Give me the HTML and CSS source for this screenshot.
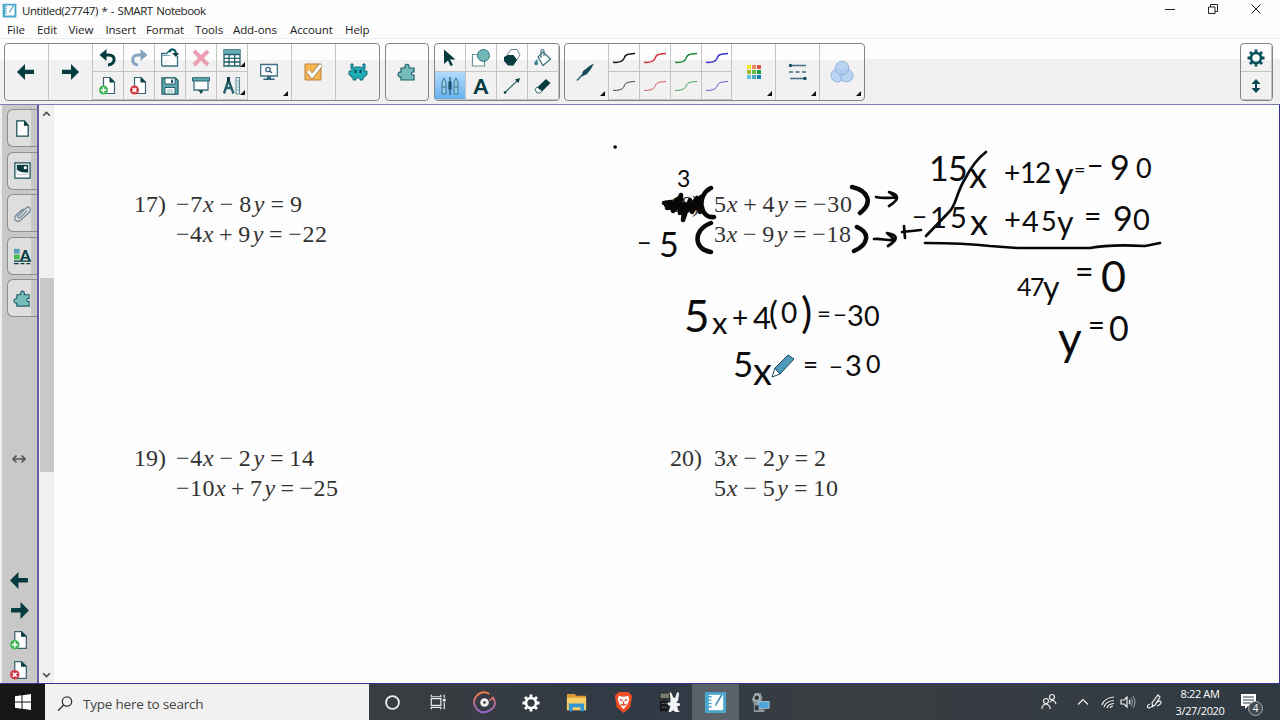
FILE: index.html
```
<!DOCTYPE html>
<html lang="en">
<head>
    <meta charset="UTF-8">
    <meta name="viewport" content="width=device-width, initial-scale=1.0">
    <title>Untitled(27747) * - SMART Notebook</title>
    <link rel="stylesheet" href="styles.css">
</head>
<body>
    <!-- Shared icons -->
    <svg class="defs" width="0" height="0">
        <symbol id="arrow-left" viewBox="0 0 20 16"><path d="M1 8 9 0V5.700H18V10H9V16Z"/></symbol>
        <symbol id="arrow-right" viewBox="0 0 20 16"><path d="M19 8 11 0V5.700H2V10H11V16Z"/></symbol>
        <symbol id="page" viewBox="0 0 20 20"><path d="M5.500 1.500H12L16.500 6V17.500H5.500Z" fill="#fff" stroke="#3d6470" stroke-width="1.200"/><path d="M11.500 1 17 6.500H11.500Z" fill="#063b3f"/></symbol>
        <symbol id="page-add" viewBox="0 0 20 20"><use href="#page"/><circle cx="5.500" cy="14" r="4.500" fill="#3fb757"/><path d="M5.500 11.300V16.700M2.800 14H8.200" stroke="#fff" stroke-width="1.500"/></symbol>
        <symbol id="page-del" viewBox="0 0 20 20"><use href="#page"/><circle cx="5.500" cy="14" r="4.500" fill="#cf3a45"/><path d="M3.600 12.100 7.400 15.900M7.400 12.100 3.600 15.900" stroke="#fff" stroke-width="1.500"/></symbol>
        <symbol id="puzzle" viewBox="0 0 20 20"><path d="M4 6H8C7 1 13 1 12 6H17V10C13.500 9 13.500 14 17 13V18H4V15C0 15.500 0 9.500 4 10Z" fill="#74bdbb" stroke="#24616b" stroke-width="1.200"/></symbol>
        <symbol id="stroke" viewBox="0 0 24 12"><path d="M1 10.300C6 10.800 10.500 9.500 12 6.500 13 2.800 15 2 23 1.500" fill="none" stroke="currentColor"/></symbol>
        <symbol id="gear" viewBox="0 0 20 20"><circle cx="10" cy="10" r="5" fill="none" stroke="currentColor" stroke-width="2.600"/><path d="M10 1.500V5M10 15V18.500M1.500 10H5M15 10H18.500M4 4 6.500 6.500M13.500 13.500 16 16M16 4 13.500 6.500M6.500 13.500 4 16" stroke="currentColor" stroke-width="2.800"/></symbol>
        <symbol id="notebook" viewBox="0 0 24 24"><rect x="1" y="1" width="22" height="22" rx="1" fill="#4ba7cc"/><path d="M5 4H20V20H5Z" fill="#fff"/><path d="M4 6H8M4 9.500H8M4 13H8M4 16.500H8" stroke="#4ba7cc" stroke-width="1.500"/><path d="M19.500 4 13 14.500 11.500 16.500 12 13.500 18 3.500Z" fill="#2d7fa5"/></symbol>
    </svg>

    <!-- Title bar -->
    <header class="titlebar">
        <svg class="app-icon" viewBox="0 0 24 24"><use href="#notebook"/></svg>
        <span class="title">Untitled(27747) * - SMART Notebook</span>
        <div class="window-buttons">
            <svg viewBox="0 0 12 12"><path d="M1 6.500H11"/></svg>
            <svg viewBox="0 0 12 12"><path d="M1.500 4H8V10.500H1.500ZM3.500 4V1.500H10.500V8.500H8"/></svg>
            <svg viewBox="0 0 12 12"><path d="M1.500 1.500 10.500 10.500M10.500 1.500 1.500 10.500"/></svg>
        </div>
    </header>

    <!-- Menu -->
    <nav class="menubar">
        <span class="m-file">File</span>
        <span class="m-edit">Edit</span>
        <span class="m-view">View</span>
        <span class="m-insert">Insert</span>
        <span class="m-format">Format</span>
        <span class="m-tools">Tools</span>
        <span class="m-addons">Add-ons</span>
        <span class="m-account">Account</span>
        <span>Help</span>
    </nav>

    <!-- Toolbar -->
    <div class="toolbar">
        <div class="group">
            <div class="tool"><svg class="wide-arrow" viewBox="0 0 20 16"><use href="#arrow-left"/></svg></div>
            <div class="tool"><svg class="wide-arrow" viewBox="0 0 20 16"><use href="#arrow-right"/></svg></div>
            <div class="tool-grid cols-5">
                <div class="tool"><svg viewBox="0 0 20 20"><path d="M5 7H11C18 7 18 16 10 17" fill="none" stroke="#063b3f" stroke-width="3"/><path d="M1.500 7 8.500 1V13Z"/></svg></div>
                <div class="tool"><svg viewBox="0 0 20 20"><path d="M15 7H9C2 7 2 16 9 17" fill="none" stroke="#86a3bf" stroke-width="3"/><path d="M18.500 7 11.500 1V13Z" fill="#86a3bf"/></svg></div>
                <div class="tool"><svg viewBox="0 0 20 20"><path d="M1.700 18V5.500H7L8.500 3.500H11M17.500 8V18H1.700" fill="#fff" stroke="#3a7182" stroke-width="1.300"/><path d="M2 7.500H10" stroke="#6babb7"/><path d="M9 4C11 0 15 1 16 5" fill="none" stroke="#07585f" stroke-width="2.200"/><path d="M12 5H19L16 9Z"/></svg></div>
                <div class="tool"><svg viewBox="0 0 20 20"><path d="M3 3 17 17M17 3 3 17" stroke="#eda0b4" stroke-width="4"/></svg></div>
                <div class="tool more"><svg viewBox="0 0 20 20"><path d="M2 2H18V18H2Z" fill="#fff" stroke="#24616b" stroke-width="1.300"/><path d="M2 2H18V6H2Z" fill="#62aeb4"/><path d="M2 6.500H18M2 10.300H18M2 14H18M7 6V18M12.700 6V18" stroke="#24616b" stroke-width="1.300"/></svg></div>
                <div class="tool"><svg viewBox="0 0 20 20"><use href="#page-add"/></svg></div>
                <div class="tool"><svg viewBox="0 0 20 20"><use href="#page-del"/></svg></div>
                <div class="tool"><svg viewBox="0 0 20 20"><path d="M2 2H15.500L18 4.500V18H2Z" fill="#60a9b2" stroke="#24616b" stroke-width="1.300"/><path d="M5 2H15V8H5ZM5 11.500H15V18H5Z" fill="#fff" stroke="#24616b"/><path d="M11 3.500H13V7H11Z" fill="#245b68"/><path d="M7 14H13M7 16H13" stroke="#9ab8be"/></svg></div>
                <div class="tool"><svg viewBox="0 0 20 20"><path d="M3 4H17V14H3Z" fill="#fff" stroke="#3a7182" stroke-width="1.300"/><path d="M1.500 1.700H18.500V5H1.500Z" fill="#64aab6" stroke="#24616b"/><path d="M7.500 14.500H12.500L10 18Z"/></svg></div>
                <div class="tool more"><svg viewBox="0 0 20 20"><path d="M6.500 4 2 17.500M6.500 4 11.500 17.500M4 12H9" fill="none" stroke="#24616b" stroke-width="2.400"/><path d="M5 1H8V6H5Z"/><path d="M14 1.500H17.500V18H14Z" fill="#e8f3f4" stroke="#598692"/><path d="M15.500 5H17M15.500 8H17M15.500 11H17M15.500 14H17" stroke="#598692"/></svg></div>
            </div>
            <div class="tool more"><svg viewBox="0 0 20 20"><path d="M1.700 2.500H18.300V14H1.700Z" fill="#fff" stroke="#3f7085" stroke-width="1.300"/><path d="M8 14H12V16.500H15.500V18H4.500V16.500H8Z" fill="#33667b"/><circle cx="9" cy="7.500" r="2.200" fill="none" stroke="#3a637f" stroke-width="1.300"/><path d="M11 9 13 11" stroke="#3a637f" stroke-width="1.500"/></svg></div>
            <div class="tool"><svg viewBox="0 0 20 20"><path d="M2 2H18V18H2Z" fill="#f6b452" stroke="#b78239"/><path d="M5 9 9 14 18 3" fill="none" stroke="#8e7854" stroke-width="4.400"/><path d="M5 9 9 14 18 3" fill="none" stroke="#fff" stroke-width="3"/></svg></div>
            <div class="tool"><svg viewBox="0 0 20 20"><path d="M3 2H5V6H7V5H13V6H15V2H17V7H16V9H19V13H17V15H15V18H12V16H8V18H5V15H3V13H1V9H4V7H3Z" fill="#21adb8" stroke="#126f7e"/><path d="M6.500 8H8.500V11H6.500ZM11.500 8H13.500V11H11.500Z" fill="#05424b"/></svg></div>
        </div>

        <div class="group single">
            <div class="tool"><svg viewBox="0 0 20 20"><use href="#puzzle"/></svg></div>
        </div>

        <div class="group">
            <div class="tool-grid cols-4">
                <div class="tool"><svg viewBox="0 0 20 20"><path d="M4 1.500 15.500 11.500 10 11.500 13 17 10.500 18 8 12.500 4 16Z"/></svg></div>
                <div class="tool"><svg viewBox="0 0 20 20"><path d="M1.500 6.500H13.500V18H1.500Z" fill="#fff" stroke="#6f9696" stroke-width="1.200"/><circle cx="12.500" cy="7.500" r="6" fill="#70b7b7" stroke="#34737b"/></svg></div>
                <div class="tool"><svg viewBox="0 0 20 20"><path d="M9 1.500H15L18 7 14 13H8L5 7Z" fill="#fff" stroke="#69888d"/><path d="M6 7H11.500L15 12 11.500 17.500H6L2 13V9Z"/></svg></div>
                <div class="tool"><svg viewBox="0 0 20 20"><path d="M10 4 17.500 11 10 17.500 5 9Z" fill="#fff" stroke="#417780" stroke-width="1.300"/><path d="M8 10V3C8 1 11 1 11 3V8" fill="none" stroke="#417780" stroke-width="1.200"/><path d="M4 11Q0 15 2 17 4 18 5 16Z" fill="#397c8f"/></svg></div>
                <div class="tool selected"><svg viewBox="0 0 20 20"><path d="M2 18V6L4 2 6 6V18ZM14 18V6L16 2 18 6V18Z" fill="#93cbe2" stroke="#397998"/><path d="M10 1V19M9 6H11V13H9Z" fill="#15516a" stroke="#15516a" stroke-width="1.200"/><path d="M2 11H6M14 11H18" stroke="#397998"/></svg></div>
                <div class="tool"><span class="letter">A</span></div>
                <div class="tool"><svg viewBox="0 0 20 20"><path d="M3 16.500 16 4" stroke="#376f76" stroke-width="1.200"/><circle cx="3" cy="16.500" r="1.300"/><path d="M18 2 16.500 7 13 3.500Z"/></svg></div>
                <div class="tool"><svg viewBox="0 0 20 20"><path d="M13 3 17.500 7 8 16.500H4L2 13.500Z"/><path d="M4 11 9 15 7 17H4L2 13.500Z" fill="#fff" stroke="#376f76"/></svg></div>
            </div>
        </div>

        <div class="group">
            <div class="tool more"><svg viewBox="0 0 20 20"><path d="M18 1.500C14 3 10 7 7 9L5 15 11 12C14 9 16 5 18 1.500Z" fill="#194b5a"/><path d="M6 13 1 18.500" stroke="#386b78" stroke-width="1.600"/></svg></div>
            <div class="tool-grid cols-4 pens">
                <div class="tool black"><svg viewBox="0 0 24 12"><use href="#stroke"/></svg></div>
                <div class="tool red"><svg viewBox="0 0 24 12"><use href="#stroke"/></svg></div>
                <div class="tool green"><svg viewBox="0 0 24 12"><use href="#stroke"/></svg></div>
                <div class="tool blue"><svg viewBox="0 0 24 12"><use href="#stroke"/></svg></div>
                <div class="tool black thin"><svg viewBox="0 0 24 12"><use href="#stroke"/></svg></div>
                <div class="tool red thin"><svg viewBox="0 0 24 12"><use href="#stroke"/></svg></div>
                <div class="tool green thin"><svg viewBox="0 0 24 12"><use href="#stroke"/></svg></div>
                <div class="tool blue thin"><svg viewBox="0 0 24 12"><use href="#stroke"/></svg></div>
            </div>
            <div class="tool more">
                <div class="swatches"><i class="yellow"></i><i class="orange"></i><i class="coral"></i><i class="olive"></i><i class="lime"></i><i class="leaf"></i><i class="sky"></i><i class="teal"></i><i class="azure"></i></div>
            </div>
            <div class="tool more"><svg viewBox="0 0 20 20"><path d="M2 3.500H18M2 16.500H17" stroke="#416b80" stroke-width="1.300"/><path d="M1 10H19" stroke="#416b80" stroke-width="1.500" stroke-dasharray="4 2.500"/><circle cx="2.500" cy="3.500" r="1.700" fill="#174b60"/><circle cx="17" cy="16.500" r="1.700" fill="#174b60"/></svg></div>
            <div class="tool more"><svg class="circles" viewBox="0 0 24 24"><g fill="#aecdf2" fill-opacity=".8" stroke="#86a8d2" stroke-width=".8"><circle cx="7.500" cy="15.500" r="6.500"/><circle cx="16.500" cy="15.500" r="6.500"/><circle cx="12" cy="8" r="6.800"/></g></svg></div>
        </div>

        <div class="group settings">
            <div class="tool-grid cols-1">
                <div class="tool gear"><svg viewBox="0 0 20 20"><use href="#gear"/></svg></div>
                <div class="tool"><svg viewBox="0 0 20 20"><path d="M10 3 14.500 8H11V12H14.500L10 17 5.500 12H9V8H5.500Z" fill="#084b56"/></svg></div>
            </div>
        </div>
    </div>

    <!-- Workspace -->
    <main class="workspace">
        <aside class="sidebar">
            <div class="tab"><svg viewBox="0 0 20 20"><path d="M4 2H12L16 6.500V18H4Z" fill="#fff" stroke="#174e53" stroke-width="1.300"/><path d="M11.500 1.500 16.500 7H11.500Z"/></svg></div>
            <div class="tab"><svg viewBox="0 0 20 20"><path d="M2 2H18V18H2Z" fill="#fff" stroke="#174e53" stroke-width="1.300"/><path d="M4 4H16V14H4Z"/><path d="M4 9Q8 13 16 12V14H4Z" fill="#fff"/><circle cx="13" cy="7" r="1.700" fill="#fff"/></svg></div>
            <div class="tab"><svg viewBox="0 0 20 20"><path d="M15 7 8 14Q5 16 5 13L13 5Q17 1 18 5 19 7 16 10L8 17Q4 20 2 16 1 14 4 11L11 5" fill="none" stroke="#718797" stroke-width="1.300"/></svg></div>
            <div class="tab"><svg viewBox="0 0 20 20"><path d="M1 3H7V8H1Z" fill="#5b9cbf"/><path d="M1 9H7V14H1Z" fill="#42bd4b"/><path d="M1 16H19M1 18.500H6M8 18.500H12M14 18.500H18" stroke="#063b3f" stroke-width="1.300"/></svg><span class="letter">A</span></div>
            <div class="tab"><svg viewBox="0 0 20 20"><use href="#puzzle"/></svg></div>
            <svg class="resize" viewBox="0 0 14 10"><path d="M1 5H13M4.500 1.500 1 5 4.500 8.500M9.500 1.500 13 5 9.500 8.500"/></svg>
            <div class="page-controls">
                <svg viewBox="0 0 20 18"><use href="#arrow-left"/></svg>
                <svg viewBox="0 0 20 18"><use href="#arrow-right"/></svg>
                <svg viewBox="0 0 20 20"><use href="#page-add"/></svg>
                <svg viewBox="0 0 20 20"><use href="#page-del"/></svg>
            </div>
        </aside>
        <div class="scrollbar">
            <svg viewBox="0 0 8 6"><path d="M1 5 4 2 7 5"/></svg>
            <div class="thumb"></div>
            <svg viewBox="0 0 8 6"><path d="M1 1 4 4 7 1"/></svg>
        </div>

        <!-- Worksheet page, drawn in window coordinates -->
        <svg class="canvas" viewBox="54 105 1225 578">
            <g class="problem">
                <text x="134" y="212" textLength="32">17)</text>
                <text x="176" y="212" textLength="126">−7<tspan class="var">x</tspan> − 8<tspan class="var" dx="2">y</tspan> = 9</text>
                <text x="176" y="242" textLength="151">−4<tspan class="var">x</tspan> + 9<tspan class="var" dx="2">y</tspan> = −22</text>
                <text x="670" y="212" textLength="30">18)</text>
                <text x="714" y="212" textLength="138">5<tspan class="var">x</tspan> + 4<tspan class="var" dx="2">y</tspan> = −30</text>
                <text x="714" y="242" textLength="137">3<tspan class="var">x</tspan> − 9<tspan class="var" dx="2">y</tspan> = −18</text>
                <text x="134" y="466" textLength="32">19)</text>
                <text x="176" y="466" textLength="138">−4<tspan class="var">x</tspan> − 2<tspan class="var" dx="2">y</tspan> = 14</text>
                <text x="176" y="496" textLength="162">−10<tspan class="var">x</tspan> + 7<tspan class="var" dx="2">y</tspan> = −25</text>
                <text x="670" y="466" textLength="32">20)</text>
                <text x="714" y="466" textLength="112">3<tspan class="var">x</tspan> − 2<tspan class="var" dx="2">y</tspan> = 2</text>
                <text x="714" y="496" textLength="124">5<tspan class="var">x</tspan> − 5<tspan class="var" dx="2">y</tspan> = 10</text>
            </g>

            <!-- Handwritten work, each character at its own spot -->
            <g class="hand">
                <text x="677" y="187" font-size="23">3</text>
                <text x="637 659" y="252 257" font-size="34"><tspan font-size="25">−</tspan>5</text>

                <text x="929 948 969 1004 1020 1035 1055 1074 1087 1110 1136" y="181 181 188 183 183 183 188 177 176 180 178" font-size="34">15<tspan font-size="36">x</tspan><tspan font-size="28">+12</tspan><tspan font-size="36">y</tspan><tspan font-size="20">=</tspan><tspan font-size="28">−</tspan>9<tspan font-size="27">0</tspan></text>
                <text x="912 930 950 970 1004 1022 1041 1057 1084 1113 1133" y="226 228 228 235 230 232 231 234 227 231 230" font-size="29"><tspan font-size="26">−</tspan>15<tspan font-size="36">x</tspan>+4<tspan font-size="27">5</tspan><tspan font-size="32">y</tspan><tspan font-size="30">=</tspan><tspan font-size="34">9</tspan><tspan font-size="29">0</tspan></text>
                <text x="1017 1030 1043 1075 1101" y="296 296 299 283 292" font-size="32"><tspan font-size="25">4</tspan><tspan font-size="25">7</tspan>y=<tspan font-size="43">0</tspan></text>
                <text x="1058 1088 1109" y="355 335 341" font-size="46">y<tspan font-size="29">=</tspan><tspan font-size="34">0</tspan></text>

                <text x="684 712 732 753 769 781 801 817 833 847 864" y="332 334 328 329 325 323 328 322 323 326 326" font-size="31"><tspan font-size="44">5</tspan>x<tspan font-size="28">+</tspan>4<tspan font-size="33">(</tspan><tspan font-size="28">0</tspan><tspan font-size="42">)</tspan><tspan font-size="24">=−</tspan><tspan font-size="29">3</tspan><tspan font-size="27">0</tspan></text>
                <text x="733 753 803 829 845 866" y="377 385 374 375 376 373" font-size="35">5<tspan font-size="38">x</tspan><tspan font-size="26">=</tspan><tspan font-size="24">−</tspan><tspan font-size="29">3</tspan><tspan font-size="25">0</tspan></text>
            </g>

            <g class="ink">
                <path class="dot" d="M615 147h.2"/>
                <path class="bold" d="M664 203 671 202 667 208 678 199 673 211 681 195 680 213 685 204 683 220 690 200 687 211 697 198 692 212 701 197 700 212M666 205H699M670 208H698"/>
                <path class="bold" d="M711 188C696 195 700 219 714 217M711 223C692 230 694 250 711 252M852 187C869 191 873 203 860 213M857 227C871 233 868 245 854 251"/>
                <path d="M876 197C884 199 891 197 897 198L889 192Q905 196 889 206M874 239C881 238 887 241 895 240L887 233Q904 236 888 246M904 226 905 238M902 232 921 230"/>
                <path d="M986 152Q974 161 965 179C957 191 956 205 950 211L926 236"/>
                <path d="M925 243Q964 243 990 246L1017 248H1090Q1110 244 1145 246L1160 243"/>
            </g>

            <!-- Pen cursor -->
            <g class="pen-cursor" stroke-linejoin="round">
                <path d="M772 377 775 368 780 374Z" fill="#fff"/>
                <path d="M775 368 788 355 794 359 780 374Z" fill="#519bb9"/>
            </g>
        </svg>
    </main>

    <!-- Taskbar -->
    <footer class="taskbar">
        <div class="start"><svg viewBox="0 0 16 16"><path d="M0 2.200 6.500 1.300V7.500H0ZM7.500 1.200 16 0V7.500H7.500ZM0 8.500H6.500V14.700L0 13.800ZM7.500 8.500H16V16L7.500 14.800Z"/></svg></div>
        <div class="search">
            <svg viewBox="0 0 18 18"><circle cx="11" cy="6.500" r="4.700"/><path d="M7.700 10 2 15.700"/></svg>
            <span>Type here to search</span>
        </div>
        <div class="apps">
            <div class="app"><svg viewBox="0 0 24 24"><circle cx="12" cy="12" r="6.700" fill="none" stroke="#eee" stroke-width="1.900"/></svg></div>
            <div class="app"><svg viewBox="0 0 24 24"><path d="M4.500 8H14.500V15H4.500ZM4.500 4V6H14.500V4M4.500 19V17H14.500V19M18 4V7M18 12V19" fill="none" stroke="#e8e8e8" stroke-width="1.300"/><path d="M16.500 8H19.500V11H16.500Z" fill="#e8e8e8"/></svg></div>
            <div class="app"><svg viewBox="0 0 24 24"><defs><linearGradient id="ring" x2="0" y2="1"><stop offset="0" stop-color="#f27b43"/><stop offset=".5" stop-color="#b96c86"/><stop offset="1" stop-color="#9165cd"/></linearGradient></defs><path d="M17 3Q10-1 4 5T4 19Q10 25 18 20T21 7L17 10" fill="none" stroke="url(#ring)" stroke-width="2"/><circle cx="12" cy="12" r="4.500" fill="#eee"/><circle cx="12" cy="12" r="1.400" fill="#333"/></svg></div>
            <div class="app light"><svg viewBox="0 0 20 20"><use href="#gear"/></svg></div>
            <div class="app"><svg viewBox="0 0 24 24"><path d="M2 3H10L12 5H22V20H2Z" fill="#d99b2f"/><path d="M2 7H22V20H2Z" fill="#f7cf66"/><path d="M4 13H20V21H16V17H8V21H4Z" fill="#3594d2"/></svg></div>
            <div class="app"><svg viewBox="0 0 24 24"><path d="M7 1H17L21 5 19 17 12 23 5 17 3 5Z" fill="#f14c24"/><path d="M7 5 11 6H13L17 5 18 9 16 14 12 19 8 14 6 9Z" fill="#fff"/><path d="M8 9 11 10M16 9 13 10M12 11V14M9 14 12 15 15 14" fill="none" stroke="#d54926" stroke-width="1.400"/></svg></div>
            <div class="app"><svg viewBox="0 0 24 24"><path d="M2 2H12V8H2Z" fill="#777b69" stroke="#222"/><path d="M2 10H11V21H2Z" fill="#15171a"/><path d="M4 13H9M4 17H9" stroke="#777" stroke-dasharray="2 1"/><path d="M12 1 14 2 16 7H18L20 1 22 2 21 10 19 12 23 13V15L20 16 21 20 23 22H18L16 20 13 22H11L13 16 10 14V12L13 12 13 8Z" fill="#f4f4f4"/></svg></div>
            <div class="app active"><svg viewBox="0 0 24 24"><use href="#notebook"/></svg></div>
            <div class="app"><svg viewBox="0 0 24 24"><path d="M5 2H11L13 7 11 13V19H15V22H4V13L2 9Z" fill="#8c999d"/><circle cx="7" cy="7" r="3" fill="#34383b" stroke="#cfdddf"/><path d="M9 11H20V18H9Z" fill="#4ca3d9" stroke="#aec5ce"/><path d="M5 15H9V20H5Z" fill="#303940"/></svg></div>
        </div>
        <div class="tray">
            <svg class="people" viewBox="0 0 18 18"><circle cx="6" cy="8" r="2.500"/><path d="M2 16V14Q6 8 10 14V16"/><circle cx="12" cy="4" r="2.500"/><path d="M10 9Q14 5 16 11"/></svg>
            <svg class="chevron" viewBox="0 0 18 18"><path d="M4 11.500 9 6.500 14 11.500"/></svg>
            <svg class="wifi" viewBox="0 0 18 18"><path d="M3 12Q5 5 15 4M5 14Q7 8 15 7.500M8 15Q9 11 15 10.500M11 15Q12 13 14 13"/></svg>
            <svg class="sound" viewBox="0 0 18 18"><path d="M2 7H5L8 4V14L5 11H2ZM10 7Q12 9 10 11"/><path class="dim" d="M12 5Q15 9 12 13M14 3Q18 9 14 15"/></svg>
            <svg class="pen" viewBox="0 0 18 18"><path d="M7 13C3 18 0 12 5 11M8 14 7 10 13 2 15 4 10 12 7 14M11 10C16 5 19 11 12 13"/></svg>
            <div class="clock"><span>8:22 AM</span><span>3/27/2020</span></div>
            <div class="notifications">
                <svg viewBox="0 0 18 18"><path d="M1 1H16V13H8L5 16V13H1Z" fill="#fff" stroke="none"/><path d="M3 4H14M3 7H14M3 10H11" stroke="#333b45"/></svg>
                <span class="badge">4</span>
            </div>
        </div>
    </footer>
</body>
</html>
```
FILE: styles.css
```
:root {
    --icon: #063b3f;
    --line: #c4c4c4;
    --frame: #7b7ab5;
}

* {
    box-sizing: border-box;
}

body {
    margin: 0;
    width: 1280px;
    height: 720px;
    overflow: hidden;
    display: flex;
    flex-direction: column;
    background: #fdfdfd;
    color: #222;
    font-family: "Open Sans", "Noto Sans", sans-serif;
    font-size: 12px;
}

.defs {
    position: absolute;
}

svg {
    display: block;
    flex: none;
}

/* Title bar and menu */
.titlebar {
    height: 20px;
    display: flex;
    align-items: center;
    padding-left: 2px;
}

.app-icon {
    width: 15px;
    height: 15px;
}

.title {
    margin-left: 5px;
    font-size: 11.5px;
    letter-spacing: -0.45px;
    word-spacing: 1px;
}

.window-buttons {
    display: flex;
    gap: 31px;
    margin: -3px 18px 0 auto;
}

.window-buttons svg {
    width: 12px;
    height: 12px;
    fill: none;
    stroke: #222;
}

.menubar {
    height: 19px;
    display: flex;
    align-items: center;
    padding: 2px 0 0 7px;
    border-bottom: 1px solid #eee;
    font-size: 11.5px;
    line-height: 18px;
    letter-spacing: -0.1px;
}

.m-file { width: 30px; }
.m-edit { width: 31.5px; }
.m-view { width: 37px; }
.m-insert { width: 40.5px; }
.m-format { width: 49px; }
.m-tools { width: 38px; }
.m-addons { width: 57px; }
.m-account { width: 55px; }

/* Toolbar */
.toolbar {
    height: 65px;
    padding: 4px 7px 3px 4px;
    display: flex;
    align-items: flex-start;
    gap: 4.5px;
    background: linear-gradient(#fdfdfd 20px, #f0f0f0 20px);
}

.group {
    height: 58px;
    display: flex;
    border: 1px solid #858585;
    border-radius: 4px;
    overflow: hidden;
    background: linear-gradient(#fdfdfd 16px, #f1f1f1 16px);
}

.group > .tool {
    width: 43.9px;
}

.single > .tool {
    width: 42.5px;
}

.tool {
    position: relative;
    display: flex;
    align-items: center;
    justify-content: center;
    border-right: 1px solid var(--line);
    fill: var(--icon);
}

.group > .tool:last-child {
    border-right: 0;
}

.tool svg {
    width: 20px;
    height: 20px;
}

.tool .wide-arrow {
    height: 16px;
}

.tool .circles {
    width: 24px;
    height: 24px;
}

.tool-grid {
    display: grid;
    grid-template-rows: 28px 28px;
}

.tool-grid .tool {
    border-bottom: 1px solid var(--line);
}

.cols-5 { grid-template-columns: repeat(5, 31px); }
.cols-4 { grid-template-columns: repeat(4, 30.9px); }
.cols-1 { grid-template-columns: 31px; }

.settings {
    margin-left: auto;
}

/* black corner on tools with a drop-down */
.more::after {
    content: "";
    position: absolute;
    right: 3px;
    bottom: 4px;
    border-left: 5px solid transparent;
    border-bottom: 5px solid #111;
}

.tool-grid .more::after {
    right: 2px;
}

.selected {
    background: linear-gradient(#b2dbfa, #67b0ef);
}

.letter {
    color: var(--icon);
    font: 900 21px/20px Lato, sans-serif;
}

.pens svg {
    width: 24px;
    height: 12px;
    stroke-width: 1.5;
}

.pens .thin svg {
    stroke-width: 0.8;
}

.black { color: #171717; }
.red { color: #d8323b; }
.green { color: #1c8b34; }
.blue { color: #3833c8; }
.gear { color: #07505b; }

.swatches {
    display: grid;
    grid-template-columns: repeat(3, 4px);
    grid-auto-rows: 4px;
    gap: 1px;
}

.yellow { background: #f4e626; }
.orange { background: #e88d55; }
.coral { background: #dc5347; }
.olive { background: #a4b331; }
.lime { background: #64bd3b; }
.leaf { background: #199c43; }
.sky { background: #5fc7d9; }
.teal { background: #49a9c3; }
.azure { background: #167db6; }

/* Workspace */
.workspace {
    height: 580px;
    display: flex;
    border-top: 1px solid var(--frame);
    border-bottom: 1px solid #343495;
    border-right: 1px solid #30308e;
}

.sidebar {
    width: 39px;
    padding: 4px 0 0 5px;
    display: flex;
    flex-direction: column;
    gap: 4.5px;
    background: #c8c8c8;
    border-left: 2px solid #ededed;
    border-right: 2px solid #6460a0;
}

.tab {
    position: relative;
    width: 30px;
    height: 38px;
    flex: none;
    display: flex;
    align-items: center;
    padding-left: 5px;
    background: linear-gradient(90deg, #dedede 23px, #c8c8c8 23px);
    border: 1px solid #8e8e8e;
    border-right: 0;
    border-radius: 6px 0 0 6px;
    fill: var(--icon);
}

.tab svg {
    width: 19px;
    height: 19px;
}

.tab .letter {
    position: absolute;
    left: 12px;
    top: 7px;
    font-size: 15px;
}

.resize {
    width: 14px;
    height: 10px;
    margin: 132px 0 0 5px;
    fill: none;
    stroke: #555;
    stroke-width: 1.7;
}

.page-controls {
    margin: auto 0 2px 2px;
    display: flex;
    flex-direction: column;
    gap: 9px;
    fill: var(--icon);
}

.page-controls svg {
    width: 21px;
    height: 21px;
}

.scrollbar {
    width: 15px;
    display: flex;
    flex-direction: column;
    align-items: center;
    background: #f0f0f0;
    padding: 5px 0 4px;
}

.scrollbar svg {
    width: 9px;
    height: 7px;
    fill: none;
    stroke: #444;
    stroke-width: 1.3;
}

.thumb {
    width: 14px;
    height: 194px;
    margin: 161px 0 auto;
    background: #c8c8c8;
}

.canvas {
    width: 1225px;
    height: 578px;
}

.problem {
    fill: #333;
    font: 24px "Liberation Serif", serif;
    word-spacing: -1.5px;
}

.var {
    font-style: italic;
}

.hand {
    fill: #0b0b0b;
    font-family: Lato, sans-serif;
}

.ink {
    fill: none;
    stroke: #080808;
    stroke-width: 2.7;
    stroke-linecap: round;
    stroke-linejoin: round;
}

.ink .bold {
    stroke-width: 4.5;
}

.ink .dot {
    stroke-width: 3.5;
}

.pen-cursor {
    stroke: #17485d;
    stroke-width: 1;
}

/* Taskbar */
.taskbar {
    height: 36px;
    display: flex;
    color: #fff;
    background: linear-gradient(90deg, #3a3d40 30%, #303a46 50%, #393d41 65%, #303a43);
}

.start {
    width: 45px;
    display: flex;
    align-items: center;
    justify-content: center;
    background: #171717;
    fill: #fff;
}

.start svg {
    width: 16px;
    height: 16px;
}

.search {
    width: 324px;
    display: flex;
    align-items: center;
    gap: 9px;
    padding: 3px 0 0 11px;
    background: #f1f1f1;
    color: #444;
    font-size: 13.5px;
    letter-spacing: -0.2px;
}

.search svg {
    width: 18px;
    height: 18px;
    fill: none;
    stroke: #333;
    stroke-width: 1.3;
}

.apps {
    display: flex;
}

.app {
    width: 46.2px;
    display: flex;
    align-items: center;
    justify-content: center;
    padding-top: 1px;
}

.app svg {
    width: 23px;
    height: 23px;
}

.app.light {
    color: #fff;
}

.app.light svg {
    width: 20px;
    height: 20px;
}

.active {
    background: #5a6169;
}

.tray {
    margin-left: auto;
    display: flex;
    align-items: center;
}

.tray svg {
    width: 18px;
    height: 18px;
    fill: none;
    stroke: #eee;
    stroke-width: 1.2;
}

.tray .people { margin-right: 16px; }
.tray .chevron { margin-right: 7px; }
.tray .wifi { margin-right: 2px; }
.tray .sound { margin-right: 8px; }
.tray .pen { margin-right: 12px; }

.tray .dim {
    stroke: #8b929a;
}

.clock {
    width: 50px;
    display: flex;
    flex-direction: column;
    align-items: center;
    font-size: 11px;
    line-height: 17px;
    letter-spacing: -0.35px;
}

.notifications {
    position: relative;
    width: 40px;
    margin-left: 15px;
}

.badge {
    position: absolute;
    left: 8px;
    top: 8px;
    width: 15px;
    height: 15px;
    border: 1px solid #aaa;
    border-radius: 50%;
    background: #444b52;
    font-size: 10px;
    line-height: 13px;
    text-align: center;
}
```
